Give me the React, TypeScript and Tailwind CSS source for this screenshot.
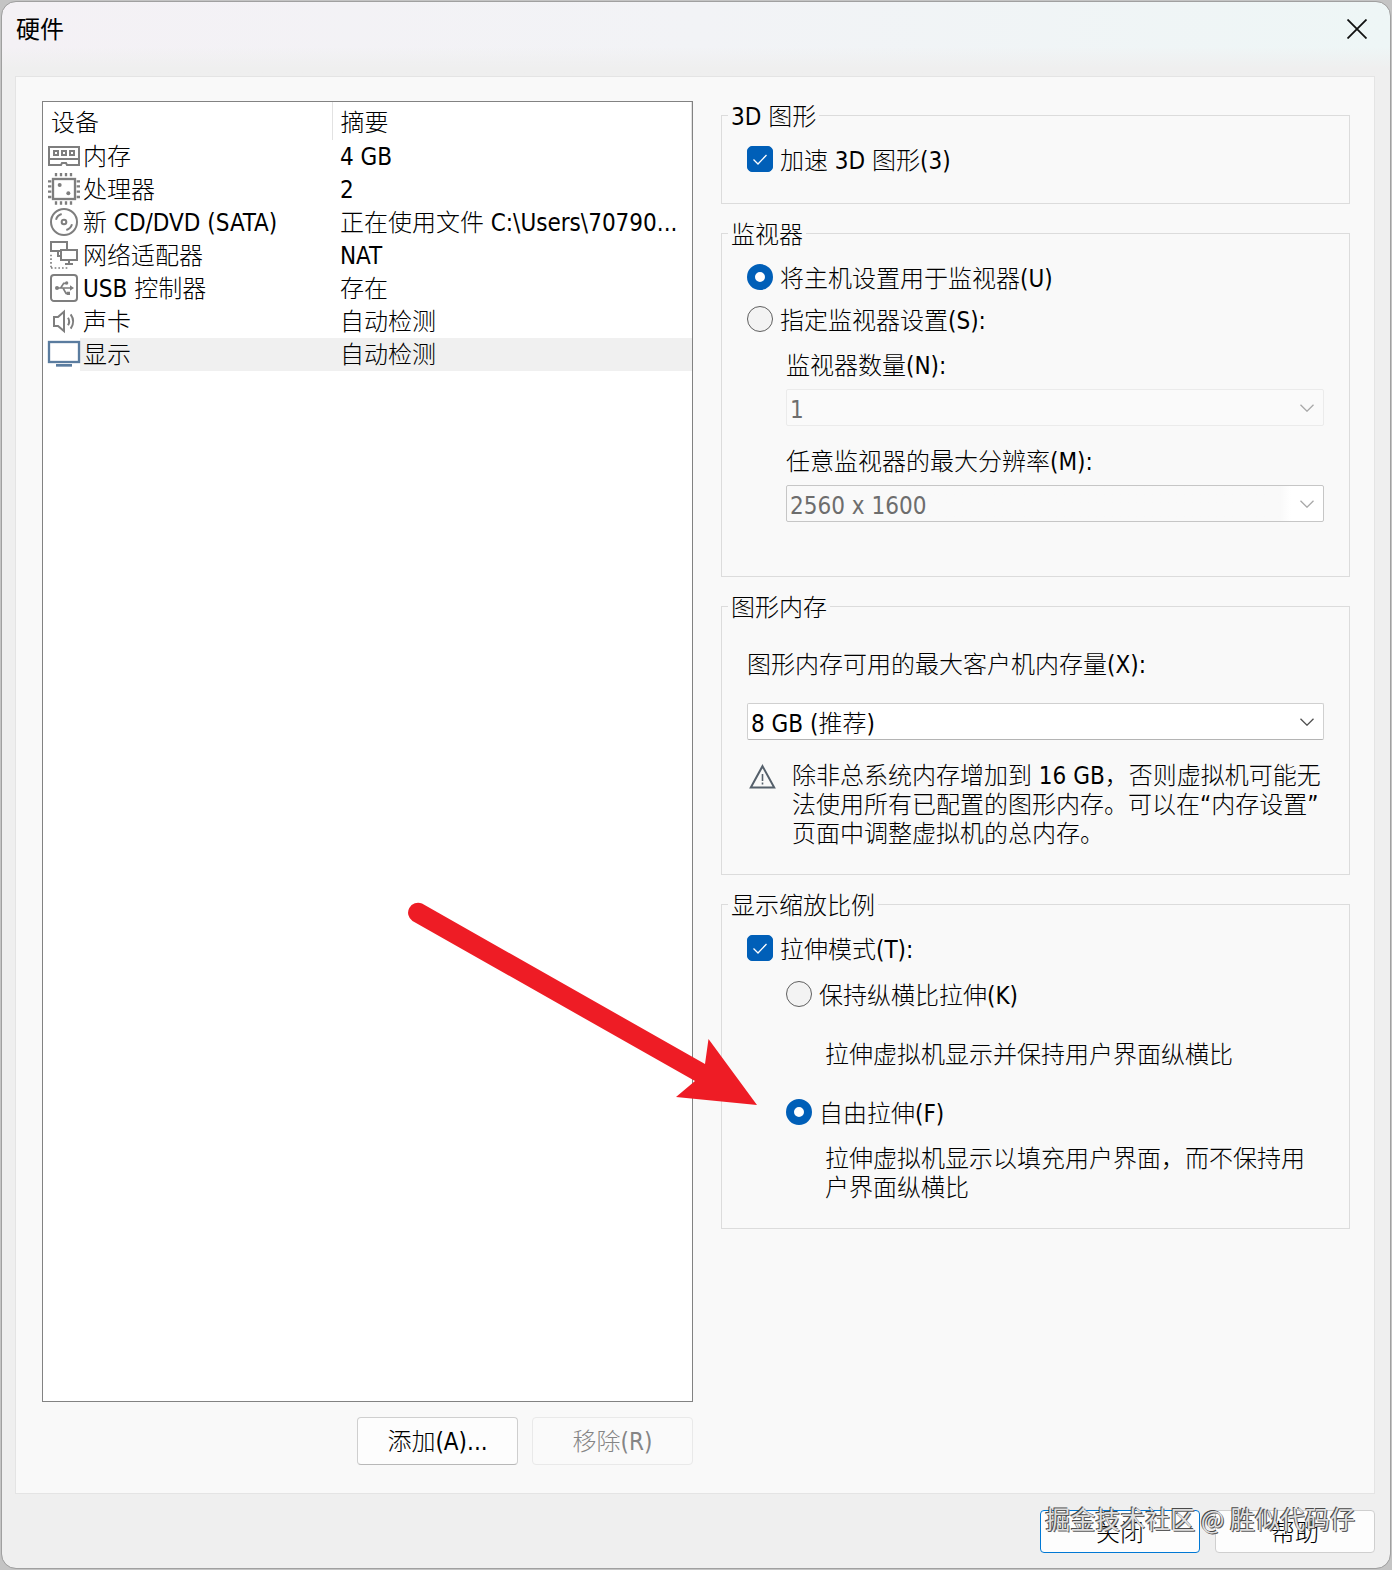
import type { ReactNode } from "react";

const GRAY = "#7e7e7e";

function IconFrame({ children }: { children: ReactNode }) {
  return (
    <svg viewBox="0 0 96 96" className="block size-8 overflow-visible" fill="none" stroke={GRAY} strokeWidth="6" aria-hidden="true">
      {children}
    </svg>
  );
}

function MemoryIcon() {
  return (
    <IconFrame>
      <path d="M3 18H93V72H57L54 66H42L39 72H3Z" />
      <path d="M3 54H93" />
      <path d="M18 30H30V42H18ZM42 30H54V42H42ZM66 30H78V42H66Z" />
    </IconFrame>
  );
}

function CpuIcon() {
  return (
    <IconFrame>
      <rect x="15" y="15" width="66" height="60" strokeWidth="7" />
      <path d="M24 -3V7M39 -3V7M54 -3V7M69 -3V7M24 82V92M39 82V92M54 82V92M69 82V92" strokeWidth="7" />
      <path d="M0 22H10M0 37H10M0 53H10M0 69H10M86 22H96M86 37H96M86 53H96M86 69H96" strokeWidth="7" />
      <circle cx="35" cy="33" r="6" fill={GRAY} stroke="none" />
      <circle cx="61" cy="58" r="6" fill={GRAY} stroke="none" />
    </IconFrame>
  );
}

function DiscIcon() {
  return (
    <IconFrame>
      <circle cx="48" cy="45" r="39" />
      <circle cx="48" cy="45" r="7" />
      <path d="M24 38A25 25 0 0 1 41 21M72 52A25 25 0 0 1 55 69" />
    </IconFrame>
  );
}

function NetworkIcon() {
  return (
    <IconFrame>
      <path d="M39 33H9V6H57V27M30 33V48H39" />
      <rect x="39" y="30" width="48" height="30" />
      <path d="M63 60V72M51 72H75" />
      <path d="M9 44V85M9 84H63" strokeWidth="5" strokeDasharray="5 6" />
    </IconFrame>
  );
}

function UsbIcon() {
  return (
    <IconFrame>
      <rect x="9" y="6" width="78" height="78" rx="9" />
      <path d="M26 45H68M38 45L47 31H54M45 45L54 61H60" strokeWidth="5" />
      <circle cx="27" cy="45" r="6" fill={GRAY} stroke="none" />
      <circle cx="56" cy="30" r="5" fill={GRAY} stroke="none" />
      <path d="M56 56H66V66H56ZM66 37L78 45L66 53Z" fill={GRAY} stroke="none" />
    </IconFrame>
  );
}

function SoundIcon() {
  return (
    <IconFrame>
      <path d="M18 33H30L48 17V75L30 60H18Z" />
      <path d="M60 35Q67 46 60 58M68 25Q83 46 68 68" />
    </IconFrame>
  );
}

function DisplayIcon() {
  return (
    <IconFrame>
      <rect x="3" y="9" width="90" height="60" fill="#fff" stroke="#5a7c9f" strokeWidth="7" />
      <path d="M24 79H72" stroke="#5a7c9f" strokeWidth="8" />
    </IconFrame>
  );
}

const devices = [
  { name: "内存", summary: "4 GB", icon: <MemoryIcon /> },
  { name: "处理器", summary: "2", icon: <CpuIcon /> },
  { name: "新 CD/DVD (SATA)", summary: "正在使用文件 C:\\Users\\70790...", icon: <DiscIcon /> },
  { name: "网络适配器", summary: "NAT", icon: <NetworkIcon /> },
  { name: "USB 控制器", summary: "存在", icon: <UsbIcon /> },
  { name: "声卡", summary: "自动检测", icon: <SoundIcon /> },
  { name: "显示", summary: "自动检测", icon: <DisplayIcon />, selected: true },
];

function DeviceTable() {
  return (
    <div className="flex-1 border border-[#828282] bg-white">
      <table className="w-full table-fixed border-collapse text-left">
        <colgroup>
          <col className="w-[37px]" />
          <col className="w-[39%]" />
          <col />
        </colgroup>
        <thead>
          <tr className="h-[38px] leading-8">
            <th colSpan={2} className="border-r border-[#e2e2e2] pt-1 pl-2 font-light">设备</th>
            <th className="border-r border-[#e2e2e2] pt-1 pl-[7px] font-light">摘要</th>
          </tr>
        </thead>
        <tbody>
          {devices.map((d) => (
            <tr key={d.name} className="h-[33px] leading-[31px]">
              <td className="pl-[5px]">{d.icon}</td>
              <td className={d.selected ? "bg-[#f0f0f0] pt-0.5 pl-[3px] whitespace-nowrap" : "pt-0.5 pl-[3px] whitespace-nowrap"}>{d.name}</td>
              <td className={d.selected ? "truncate bg-[#f0f0f0] pt-0.5 pl-[7px]" : "truncate pt-0.5 pl-[7px]"}>{d.summary}</td>
            </tr>
          ))}
        </tbody>
      </table>
    </div>
  );
}

function Group({ title, className, children }: { title: string; className: string; children: ReactNode }) {
  return (
    <fieldset className="min-w-0 border border-[#dcdcdc]">
      <legend className="ml-1.5 px-[3px] pt-1 leading-6">{title}</legend>
      <div className={"flex flex-col px-[25px] " + className}>{children}</div>
    </fieldset>
  );
}

function Check({ label }: { label: string }) {
  return (
    <label className="flex h-7 items-center gap-[7px]">
      <span className="relative flex">
        <input type="checkbox" defaultChecked className="peer size-[26px] appearance-none rounded-[5px] border border-[#6b6b6b] bg-[#f3f3f3] checked:border-[#005fb8] checked:bg-[#005fb8]" />
        <svg viewBox="0 0 26 26" className="pointer-events-none absolute inset-0 hidden size-[26px] peer-checked:block" fill="none" stroke="#fff" strokeWidth="1.3" aria-hidden="true">
          <path d="M6.5 13.5L11 18L19.5 9" />
        </svg>
      </span>
      <span className="pt-1 leading-6">{label}</span>
    </label>
  );
}

function Radio({ name, label, checked }: { name: string; label: string; checked?: boolean }) {
  return (
    <label className="flex h-7 items-center gap-[7px]">
      <input
        type="radio"
        name={name}
        defaultChecked={checked}
        className="size-[26px] shrink-0 appearance-none rounded-full border border-[#5f5f5f] bg-[#f3f3f3] checked:border-[8px] checked:border-[#005fb8] checked:bg-white"
      />
      <span className="pt-1 leading-6">{label}</span>
    </label>
  );
}

function Dropdown({ id, value, tone, disabled }: { id: string; value: string; tone: string; disabled?: boolean }) {
  return (
    <div className="relative">
      <select id={id} disabled={disabled} className={"block h-[37px] w-full appearance-none rounded-[2px] border pt-0.5 pl-[3px] opacity-100 " + tone}>
        <option>{value}</option>
      </select>
      <svg viewBox="0 0 14 8" className="pointer-events-none absolute top-[15px] right-2.5 h-2 w-3.5" fill="none" stroke={disabled ? "#a8a8a8" : "#505050"} strokeWidth="1.3" aria-hidden="true">
        <path d="M0.5 0.7L7 7.2L13.5 0.7" />
      </svg>
    </div>
  );
}

function WarningIcon() {
  return (
    <svg viewBox="0 0 27 25" className="mt-0.5 ml-0.5 h-[25px] w-[27px] shrink-0" fill="none" stroke="#55606b" strokeWidth="2" aria-hidden="true">
      <path d="M13.5 2.2L25.2 23.5H1.8Z" />
      <path d="M13.5 10V17M13.5 18.6V20.6" strokeWidth="1.6" />
    </svg>
  );
}

function Arrow() {
  return (
    <svg viewBox="0 0 352 206" className="pointer-events-none absolute top-[901px] left-[406px] h-[206px] w-[352px]" fill="#ee1c25" aria-hidden="true">
      <path d="M16 2.5A10 10 0 0 0 6.5 20L289 180L270 196L351 204L302.500 138L299 163Z" />
    </svg>
  );
}

export default function App() {
  return (
    <div className="relative flex min-h-screen flex-col bg-[#c4c4c4] p-0.5 font-['DejaVu_Sans_Condensed','Noto_Sans_CJK_SC',sans-serif] text-[24px] font-light text-black">
      <div className="flex flex-1 flex-col rounded-[14px] bg-[#efefef] outline outline-[#a0a0a0]">
        <header className="rounded-t-[14px] bg-linear-to-r from-[#f4f1f5] via-[#f2f3f6] to-[#eef6f6]">
          <div className="flex h-[74px] items-start justify-between rounded-t-[14px] bg-linear-to-b from-transparent from-60% to-[#efefef] to-90% pr-[13px] pl-3.5">
            <h1 className="pt-2.5 font-['Noto_Sans_CJK_SC',sans-serif] leading-8 font-normal">硬件</h1>
            <button type="button" aria-label="关闭窗口" className="mt-[11px] mr-0.5 flex h-8 w-9 items-center justify-center">
              <svg viewBox="0 0 20 20" className="size-5" fill="none" stroke="#111" strokeWidth="1.8" aria-hidden="true">
                <path d="M0.500 0.500L19.500 19.500M19.500 0.500L0.500 19.500" />
              </svg>
            </button>
          </div>
        </header>

        <main className="mr-[15px] ml-[13px] grid flex-1 grid-cols-[651fr_629fr] gap-x-7 border border-[#e4e4e4] bg-[#f9f9f9] pt-6 pr-6 pb-7 pl-[26px]">
          <section className="flex flex-col">
            <DeviceTable />
            <div className="mt-[15px] flex justify-end gap-3.5">
              <button type="button" className="h-12 w-[161px] rounded-[4px] border border-[#cfcfcf] border-b-[#b8b8b8] bg-[#fdfdfd] pt-0.5">添加(A)...</button>
              <button type="button" disabled className="h-12 w-[161px] rounded-[4px] border border-[#e9e9e9] bg-[#fafafa] pt-0.5 text-[#858585]">移除(R)</button>
            </div>
          </section>

          <section className="flex flex-col gap-[15px]">
            <Group title="3D 图形" className="pt-4 pb-[30px]">
              <Check label="加速 3D 图形(3)" />
            </Group>

            <Group title="监视器" className="pt-4 pb-[54px]">
              <Radio name="monitor" label="将主机设置用于监视器(U)" checked />
              <div className="h-3.5" />
              <Radio name="monitor" label="指定监视器设置(S):" />
              <div className="mt-[19px] flex flex-col gap-[9px] pl-[39px]">
                <label htmlFor="count" className="leading-7">监视器数量(N):</label>
                <Dropdown id="count" value="1" disabled tone="border-[#ebebeb] bg-[#fafafa] text-[#6d6d6d]" />
                <label htmlFor="resolution" className="mt-[13px] leading-7">任意监视器的最大分辨率(M):</label>
                <Dropdown id="resolution" value="2560 x 1600" disabled tone="border-[#c6c6c6] bg-linear-to-r from-[#f9f9f9] from-92% to-white to-94% text-[#6d6d6d]" />
              </div>
            </Group>

            <Group title="图形内存" className="pt-[31px] pb-[25px]">
              <label htmlFor="vram" className="leading-7">图形内存可用的最大客户机内存量(X):</label>
              <div className="mt-6">
                <Dropdown id="vram" value="8 GB (推荐)" tone="border-[#d0d0d0] border-b-[#b4b4b4] bg-white text-black" />
              </div>
              <div className="-mr-1 mt-[22px] flex gap-4 leading-[29px]">
                <WarningIcon />
                <p>除非总系统内存增加到 16 GB，否则虚拟机可能无法使用所有已配置的图形内存。可以在“内存设置”<wbr />页面中调整虚拟机的总内存。</p>
              </div>
            </Group>

            <Group title="显示缩放比例" className="pt-4 pb-[25px] leading-[29px]">
              <Check label="拉伸模式(T):" />
              <div className="mt-[18px] pl-[39px]">
                <Radio name="stretch" label="保持纵横比拉伸(K)" />
                <p className="mt-[33px] pl-[39px]">拉伸虚拟机显示并保持用户界面纵横比</p>
                <div className="h-7" />
                <Radio name="stretch" label="自由拉伸(F)" checked />
                <p className="mt-[19px] pl-[39px]">拉伸虚拟机显示以填充用户界面，而不保持用户界面纵横比</p>
              </div>
            </Group>
          </section>
        </main>

        <footer className="relative flex justify-end gap-[15px] pt-4 pr-[15px] pb-[15px]">
          <button type="button" className="h-[43px] w-40 rounded-[4px] border border-[#0078d4] bg-[#fdfdfd] pt-0.5">关闭</button>
          <button type="button" className="h-[43px] w-40 rounded-[4px] border border-[#cfcfcf] bg-[#fdfdfd] pt-0.5">帮助</button>
          <p className="pointer-events-none absolute top-2 right-[35px] font-['Noto_Sans_CJK_SC',sans-serif] text-[25px] leading-8 font-normal whitespace-nowrap text-[#dedede] [text-shadow:-1px_-1px_0_#4a4a4a,1px_1px_0_#5a5a5a]">
            掘金技术社区 @ 胜似代码仔
          </p>
        </footer>
      </div>
      <Arrow />
    </div>
  );
}
